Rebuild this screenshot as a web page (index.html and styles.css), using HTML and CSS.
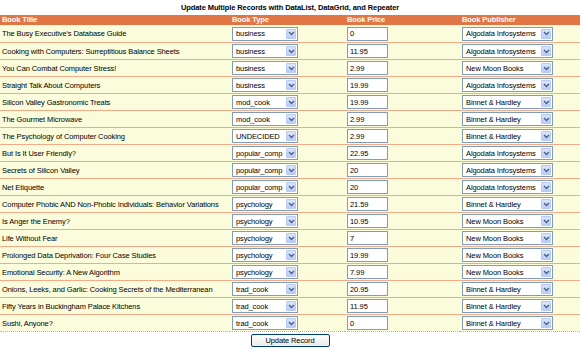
FILE: index.html
```html
<!DOCTYPE html>
<html lang="en">
<head>
    <meta charset="UTF-8">
    <title>Update Multiple Records</title>
    <link rel="stylesheet" href="styles.css">
</head>
<body>
    <h1 class="page-title">Update Multiple Records with DataList, DataGrid, and Repeater</h1>

    <table class="book-grid">
        <thead>
            <tr>
                <th class="col-title">Book Title</th>
                <th class="col-type">Book Type</th>
                <th class="col-price">Book Price</th>
                <th class="col-pub">Book Publisher</th>
            </tr>
        </thead>
        <tbody id="book-rows">
            <!-- rows filled by script below -->
        </tbody>
    </table>

    <div class="actions">
        <button class="update-btn">Update Record</button>
    </div>

<script>
    const books = [
        ["The Busy Executive's Database Guide", "business", "0", "Algodata Infosystems"],
        ["Cooking with Computers: Surreptitious Balance Sheets", "business", "11.95", "Algodata Infosystems"],
        ["You Can Combat Computer Stress!", "business", "2.99", "New Moon Books"],
        ["Straight Talk About Computers", "business", "19.99", "Algodata Infosystems"],
        ["Silicon Valley Gastronomic Treats", "mod_cook", "19.99", "Binnet & Hardley"],
        ["The Gourmet Microwave", "mod_cook", "2.99", "Binnet & Hardley"],
        ["The Psychology of Computer Cooking", "UNDECIDED", "2.99", "Binnet & Hardley"],
        ["But Is It User Friendly?", "popular_comp", "22.95", "Algodata Infosystems"],
        ["Secrets of Silicon Valley", "popular_comp", "20", "Algodata Infosystems"],
        ["Net Etiquette", "popular_comp", "20", "Algodata Infosystems"],
        ["Computer Phobic AND Non-Phobic Individuals: Behavior Variations", "psychology", "21.59", "Binnet & Hardley"],
        ["Is Anger the Enemy?", "psychology", "10.95", "New Moon Books"],
        ["Life Without Fear", "psychology", "7", "New Moon Books"],
        ["Prolonged Data Deprivation: Four Case Studies", "psychology", "19.99", "New Moon Books"],
        ["Emotional Security: A New Algorithm", "psychology", "7.99", "New Moon Books"],
        ["Onions, Leeks, and Garlic: Cooking Secrets of the Mediterranean", "trad_cook", "20.95", "Binnet & Hardley"],
        ["Fifty Years in Buckingham Palace Kitchens", "trad_cook", "11.95", "Binnet & Hardley"],
        ["Sushi, Anyone?", "trad_cook", "0", "Binnet & Hardley"]
    ];

    const arrow = '<span class="drop-arrow"><svg width="7" height="5" viewBox="0 0 7 5"><path d="M1 1 L3.5 3.5 L6 1" fill="none" stroke="#4d6185" stroke-width="1.4"/></svg></span>';

    const tbody = document.getElementById('book-rows');
    books.forEach(b => {
        const tr = document.createElement('tr');
        tr.innerHTML = `<td>${b[0].replace('&', '&amp;')}</td>
            <td><span class="fake-select type-select"><span class="sel-text">${b[1]}</span>${arrow}</span></td>
            <td><input class="price-input" type="text" value="${b[2]}"></td>
            <td><span class="fake-select pub-select"><span class="sel-text">${b[3].replace('&', '&amp;')}</span>${arrow}</span></td>`;
        tbody.appendChild(tr);
    });
</script>
</body>
</html>
```

FILE: styles.css
```css
/* Global Styles */
body {
    font-family: "Liberation Sans", Arial, sans-serif;
    font-size: 7.5px;
    letter-spacing: -0.1px;
    margin: 0;
    padding: 0;
    background-color: #fff;
    color: #000;
}

.page-title {
    font-size: 7.5px;
    font-weight: bold;
    text-align: center;
    margin: 0;
    height: 15px;
    line-height: 16px;
}

/* Grid */
.book-grid {
    width: 580px;
    border-collapse: collapse;
    table-layout: fixed;
}

.book-grid th {
    background-color: #e17644;
    color: #fff;
    font-weight: bold;
    text-align: left;
    height: 10px;
    line-height: 10px;
    padding: 0 2px;
}

.col-title { width: 226px; }
.col-type { width: 111px; }
.col-price { width: 111px; }

.book-grid td {
    background-color: #fbfcdc;
    height: 16px;
    padding: 0 2px;
    border-bottom: 1px solid #f2ab88;
    white-space: nowrap;
    overflow: hidden;
}

.book-grid tbody tr:first-child td {
    height: 17px;
}

.book-grid tbody tr:last-child td {
    border-bottom: 1px dotted #f0a07c;
}

/* Form controls */
.fake-select {
    display: flex;
    align-items: center;
    box-sizing: border-box;
    height: 14px;
    border: 1px solid #7f9db9;
    background-color: #fff;
    padding: 0 1px 0 3px;
}

.type-select { width: 66px; }
.pub-select { width: 91px; }

.sel-text {
    flex: 1;
    overflow: hidden;
    white-space: nowrap;
}

.drop-arrow {
    display: flex;
    align-items: center;
    justify-content: center;
    width: 10px;
    height: 10px;
    background: linear-gradient(#dbe6fd, #b9cdf8);
    border: 1px solid #b7c9f3;
    border-radius: 1px;
    box-sizing: border-box;
}

.price-input {
    display: block;
    box-sizing: border-box;
    width: 41px;
    height: 14px;
    border: 1px solid #7f9db9;
    font-family: "Liberation Sans", Arial, sans-serif;
    font-size: 7.5px;
    letter-spacing: -0.1px;
    padding: 0 2px;
    margin: 0;
}

.actions {
    text-align: center;
    padding-top: 2px;
}

.update-btn {
    font-family: "Liberation Sans", Arial, sans-serif;
    font-size: 7.5px;
    letter-spacing: -0.1px;
    width: 79px;
    height: 13px;
    padding: 0;
    border: 1px solid #003c74;
    border-radius: 2px;
    background: linear-gradient(#fefefe, #ebeae3);
    color: #000;
    cursor: pointer;
}
```
